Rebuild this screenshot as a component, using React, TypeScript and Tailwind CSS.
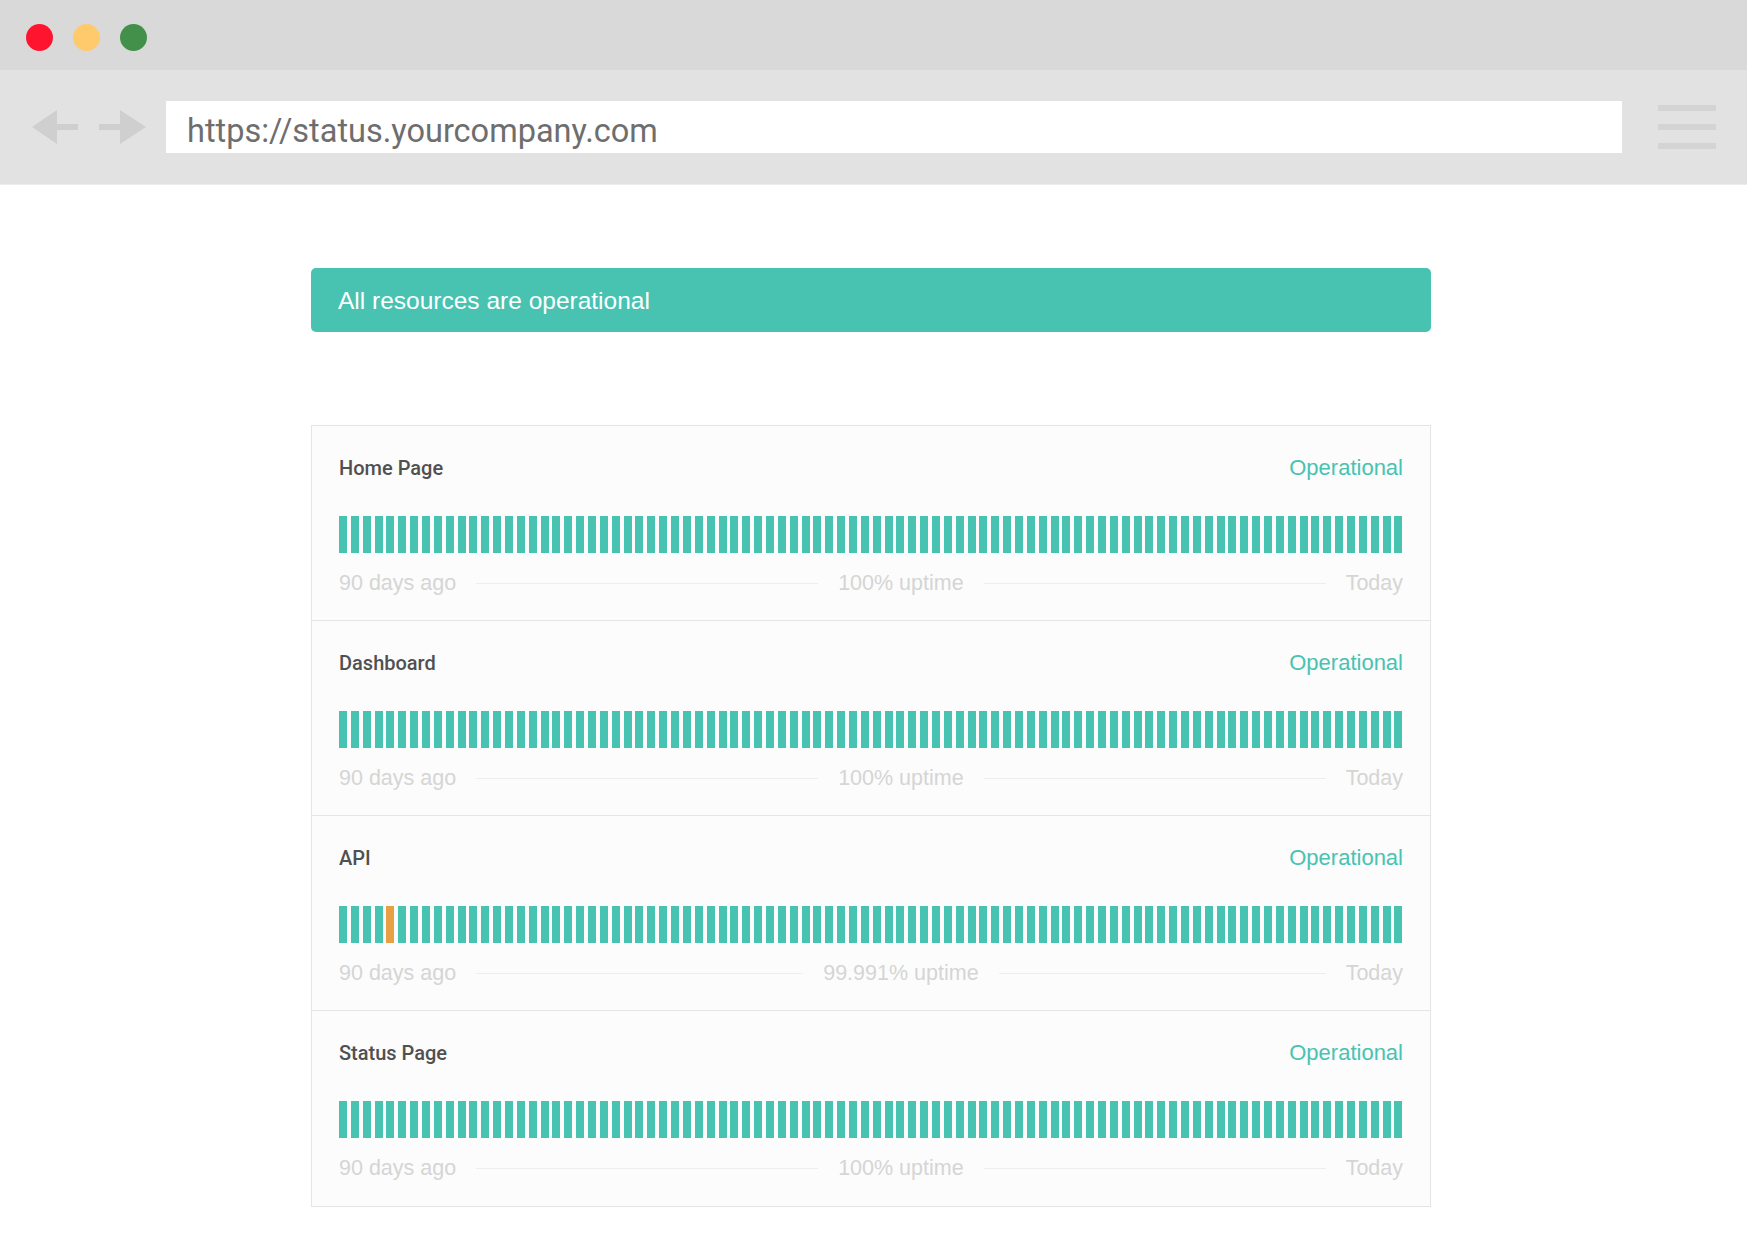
const services = [
  { name: "Home Page", uptime: "100% uptime", incidents: [] as number[] },
  { name: "Dashboard", uptime: "100% uptime", incidents: [] as number[] },
  { name: "API", uptime: "99.991% uptime", incidents: [4] },
  { name: "Status Page", uptime: "100% uptime", incidents: [] as number[] },
];

const days = Array.from({ length: 90 }, (_, i) => i);

function BackArrow() {
  return (
    <svg width="46" height="34" viewBox="0 0 46 34" fill="#cfcfcf">
      <polygon points="0,17 25,0 25,34" />
      <rect x="24" y="14" width="22" height="6" />
    </svg>
  );
}

function ForwardArrow() {
  return (
    <svg width="47" height="34" viewBox="0 0 47 34" fill="#cfcfcf">
      <rect x="0" y="14" width="22" height="6" />
      <polygon points="47,17 21,0 21,34" />
    </svg>
  );
}

function ServiceRow({ name, uptime, incidents }: { name: string; uptime: string; incidents: number[] }) {
  return (
    <div className="h-[195px] px-[27px] pt-[30px]">
      <div className="flex items-center justify-between h-[24px]">
        <span className="text-[20px] font-medium text-[#505050] font-['Roboto',sans-serif]">{name}</span>
        <span className="text-[22px] leading-[22px] text-[#48c3b1]">Operational</span>
      </div>
      <div className="mt-[36px] flex h-[37px] justify-between">
        {days.map((d) => (
          <div
            key={d}
            className={incidents.includes(d) ? "w-[8px] h-full bg-[#e8a043]" : "w-[8px] h-full bg-[#48c3b1]"}
          />
        ))}
      </div>
      <div className="mt-[17px] flex h-[26px] items-center gap-5 text-[21.5px] text-[#d5d5d5]">
        <span>90 days ago</span>
        <div className="h-px flex-1 bg-[#eeeeee]" />
        <span>{uptime}</span>
        <div className="h-px flex-1 bg-[#eeeeee]" />
        <span>Today</span>
      </div>
    </div>
  );
}

export default function App() {
  return (
    <div className="min-h-screen bg-white font-['Liberation_Sans','Helvetica_Neue',Arial,sans-serif]">
      <div className="flex h-[70px] items-center gap-[20px] bg-[#d9d9d9] pl-[26px] pt-[4px]">
        <div className="h-[27px] w-[27px] rounded-full bg-[#ff1430]" />
        <div className="h-[27px] w-[27px] rounded-full bg-[#ffca6b]" />
        <div className="h-[27px] w-[27px] rounded-full bg-[#43904a]" />
      </div>

      <div className="flex h-[115px] items-center border-b border-[#ececec] bg-[#e2e2e2] pl-[32px] pr-[31px]">
        <div className="flex items-center gap-[21px]">
          <BackArrow />
          <ForwardArrow />
        </div>
        <div className="ml-[20px] flex h-[52px] flex-1 items-center bg-white pl-[21px] pt-[9px]">
          <span className="text-[32.5px] text-[#6e6e6e] font-['Roboto',sans-serif]">https://status.yourcompany.com</span>
        </div>
        <div className="ml-[36px] flex w-[58px] flex-col gap-[13px]">
          <div className="h-[6px] bg-[#d4d4d4]" />
          <div className="h-[6px] bg-[#d4d4d4]" />
          <div className="h-[6px] bg-[#d4d4d4]" />
        </div>
      </div>

      <div className="ml-[311px] w-[1120px] pt-[83px]">
        <div className="flex h-[64px] items-center rounded-[5px] bg-[#48c3b1] px-[27px] pt-[3px]">
          <span className="text-[24.5px] text-white">All resources are operational</span>
        </div>

        <div className="mt-[93px] divide-y divide-[#e5e5e5] border border-[#e5e5e5] bg-[#fcfcfc]">
          {services.map((s) => (
            <ServiceRow key={s.name} {...s} />
          ))}
        </div>
      </div>
    </div>
  );
}
